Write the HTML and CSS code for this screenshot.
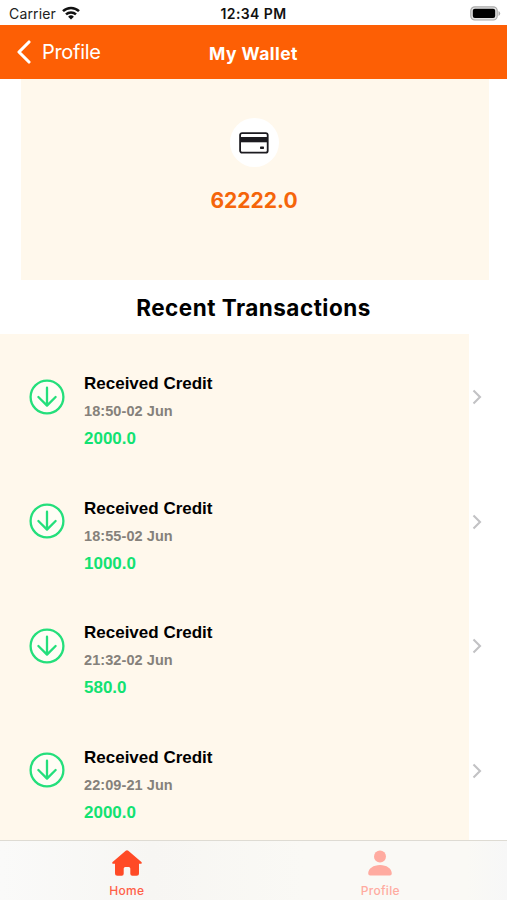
FILE: index.html
```html
<!DOCTYPE html>
<html lang="en">
<head>
    <meta charset="UTF-8">
    <meta name="viewport" content="width=device-width, initial-scale=1.0">
    <title>My Wallet</title>
    <link rel="stylesheet" href="styles.css">
</head>
<body>
    <div class="status-bar">
        <div class="carrier">
            <span>Carrier</span>
            <svg class="wifi" width="18" height="14" viewBox="0 0 18 14" fill="none" stroke="#111" stroke-width="2.5">
                <path d="M1 5.2a11.6 11.6 0 0 1 16 0M4 8.4a7.3 7.3 0 0 1 10 0"/>
                <path d="M9 13.6L6.1 10.7a4.2 4.2 0 0 1 5.8 0z" fill="#111" stroke="none"/>
            </svg>
        </div>
        <div class="time">12:34 PM</div>
        <svg class="battery" width="31" height="15" viewBox="0 0 31 15">
            <rect x="0.8" y="0.8" width="26.4" height="13.2" rx="4" fill="#e4e4e4" stroke="#aaa" stroke-width="1.2"/>
            <rect x="2.8" y="2.8" width="22.4" height="9.2" rx="2" fill="#000"/>
            <path d="M28.5 5v5q1.7-.8 1.7-2.5T28.5 5z" fill="#aaa"/>
        </svg>
    </div>

    <header class="nav-bar">
        <a class="back-btn" href="#">
            <svg width="15" height="24" viewBox="0 0 15 24" fill="none" stroke="#fff" stroke-width="3.1" stroke-linecap="round" stroke-linejoin="round">
                <path d="M13 2L3 12l10 10"/>
            </svg>
            <span>Profile</span>
        </a>
        <h1>My Wallet</h1>
    </header>

    <main>
        <section class="balance">
            <div class="card-icon">
                <svg width="30" height="22" viewBox="0 0 30 22">
                    <rect x="1.1" y="1.1" width="27.6" height="19.6" rx="2" fill="#fff" stroke="#1c1b20" stroke-width="1.8"/>
                    <path d="M1 5h28v5.3H1z" fill="#1c1b20"/>
                    <rect x="21" y="14.5" width="4" height="2.5" rx=".7" fill="#1c1b20"/>
                </svg>
            </div>
            <p class="amount">62222.0</p>
        </section>

        <h2>Recent Transactions</h2>

        <ul class="transactions">
            <li>
                <div class="transaction">
                    <svg class="received" viewBox="0 0 36 36"><circle cx="18" cy="18" r="16.4"/><path d="M18 8.7v17.8M9.4 18l8.6 8.6 8.6-8.6"/></svg>
                    <div>
                        <h3>Received Credit</h3>
                        <p class="date">18:50-02 Jun</p>
                        <p class="credit">2000.0</p>
                    </div>
                </div>
                <svg class="arrow" viewBox="0 0 10 16"><path d="M1.5 1.5L8 8l-6.5 6.5"/></svg>
            </li>
            <li>
                <div class="transaction">
                    <svg class="received" viewBox="0 0 36 36"><circle cx="18" cy="18" r="16.4"/><path d="M18 8.7v17.8M9.4 18l8.6 8.6 8.6-8.6"/></svg>
                    <div>
                        <h3>Received Credit</h3>
                        <p class="date">18:55-02 Jun</p>
                        <p class="credit">1000.0</p>
                    </div>
                </div>
                <svg class="arrow" viewBox="0 0 10 16"><path d="M1.5 1.5L8 8l-6.5 6.5"/></svg>
            </li>
            <li>
                <div class="transaction">
                    <svg class="received" viewBox="0 0 36 36"><circle cx="18" cy="18" r="16.4"/><path d="M18 8.7v17.8M9.4 18l8.6 8.6 8.6-8.6"/></svg>
                    <div>
                        <h3>Received Credit</h3>
                        <p class="date">21:32-02 Jun</p>
                        <p class="credit">580.0</p>
                    </div>
                </div>
                <svg class="arrow" viewBox="0 0 10 16"><path d="M1.5 1.5L8 8l-6.5 6.5"/></svg>
            </li>
            <li>
                <div class="transaction">
                    <svg class="received" viewBox="0 0 36 36"><circle cx="18" cy="18" r="16.4"/><path d="M18 8.7v17.8M9.4 18l8.6 8.6 8.6-8.6"/></svg>
                    <div>
                        <h3>Received Credit</h3>
                        <p class="date">22:09-21 Jun</p>
                        <p class="credit">2000.0</p>
                    </div>
                </div>
                <svg class="arrow" viewBox="0 0 10 16"><path d="M1.5 1.5L8 8l-6.5 6.5"/></svg>
            </li>
        </ul>
    </main>

    <nav class="tab-bar">
        <a class="tab active" href="#">
            <svg width="30" height="26" viewBox="0 0 30 26" fill="#ff4a26">
                <path d="M13.7.8a2 2 0 0 1 2.6 0L29.4 12q.7.8.2 1.4-.3.4-1 .4H27v9.4q0 2.5-2.5 2.5h-4.2q-2 0-2-2v-5.2q0-1.5-1.5-1.5h-3.6q-1.5 0-1.5 1.5v5.2q0 2-2 2H5.5Q3 25.7 3 23.2v-9.4H1.4q-.7 0-1-.4-.5-.6.2-1.4z"/>
            </svg>
            <span>Home</span>
        </a>
        <a class="tab" href="#">
            <svg width="30" height="26" viewBox="0 0 30 26" fill="#ffaba0">
                <circle cx="15" cy="6.5" r="6"/>
                <path d="M3.2 23.5C3.2 18.5 8.5 15 15 15s11.8 3.5 11.8 8.5q0 2-2 2H5.2q-2 0-2-2z"/>
            </svg>
            <span>Profile</span>
        </a>
    </nav>
</body>
</html>
```

FILE: styles.css
```css
* {
    box-sizing: border-box;
}
body {
    margin: 0;
    height: 100vh;
    display: flex;
    flex-direction: column;
    overflow: hidden;
    background: #fff;
    font-family: Inter, sans-serif;
}
h1, h2, h3, p, ul {
    margin: 0;
    padding: 0;
}
a {
    text-decoration: none;
}
/* STATUS BAR */
.status-bar {
    height: 25px;
    flex-shrink: 0;
    display: grid;
    grid-template-columns: 1fr auto 1fr;
    align-items: center;
    padding: 2px 6px 0 9px;
    font-size: 14px;
    color: #222;
}
.carrier {
    display: flex;
    align-items: center;
    gap: 6px;
    letter-spacing: 0.15px;
}
.wifi {
    margin-top: -2px;
}
.time {
    margin-right: 3px;
    font-weight: 600;
    letter-spacing: 0.4px;
    color: #111;
}
.battery {
    justify-self: end;
}
/* HEADER */
.nav-bar {
    height: 54px;
    flex-shrink: 0;
    display: grid;
    grid-template-columns: 1fr auto 1fr;
    align-items: center;
    padding: 2px 16px 0;
    background: #fd5f05;
    color: #fff;
}
.back-btn {
    display: flex;
    align-items: center;
    gap: 11px;
    margin-top: -2px;
    font-size: 20px;
    letter-spacing: -0.3px;
    color: #fff;
}
h1 {
    font-size: 17.5px;
    font-weight: 700;
    letter-spacing: 0.45px;
    margin-top: 1px;
}
main {
    flex: 1;
    min-height: 0;
    overflow: hidden;
}
/* BALANCE */
.balance {
    height: 201px;
    margin: 0 18px 0 21px;
    padding: 39px 2px 0 0;
    display: flex;
    flex-direction: column;
    align-items: center;
    background: #fff8ec;
}
.card-icon {
    width: 49px;
    height: 49px;
    display: flex;
    justify-content: center;
    align-items: center;
    border-radius: 50%;
    background: #fff;
}
.amount {
    margin-top: 20px;
    font-size: 21px;
    line-height: 28px;
    font-weight: 700;
    color: #f5650a;
}
h2 {
    height: 54px;
    line-height: 55px;
    text-align: center;
    font-size: 22.5px;
    font-weight: 700;
    letter-spacing: 0.48px;
    color: #000;
}
/* TRANSACTIONS */
.transactions {
    height: 510px;
    list-style: none;
    background: linear-gradient(to right, #fff8ec 469.5px, #fff 469.5px);
}
.transactions li {
    height: 124.6px;
    display: flex;
}
.transaction {
    width: 472px;
    display: flex;
    gap: 19px;
    padding: 36px 0 0 29px;
    font-family: "Liberation Sans", Arial, sans-serif;
    font-weight: bold;
}
.received {
    width: 36px;
    height: 36px;
    margin-top: 8.5px;
    fill: none;
    stroke: #24df7b;
    stroke-width: 2.3;
    stroke-linecap: round;
    stroke-linejoin: round;
}
.received circle {
    fill: #fffdf5;
}
h3 {
    padding-top: 1px;
    font-size: 17px;
    line-height: 26px;
    color: #000;
}
.date {
    font-size: 14.5px;
    line-height: 29px;
    letter-spacing: 0.08px;
    color: #85817b;
}
.credit {
    font-size: 17px;
    line-height: 25px;
    color: #12e272;
}
.arrow {
    width: 10px;
    height: 16px;
    margin-top: 55px;
    fill: none;
    stroke: #c2c2c4;
    stroke-width: 2.1;
}
/* TAB BAR */
.tab-bar {
    height: 60px;
    flex-shrink: 0;
    display: flex;
    border-top: 1px solid #dedbd3;
    background: linear-gradient(to right, #fafaf9, #f7f6f3 30%, #faf9f5 60%, #faf9f5 92%, #f7f7f7);
}
.tab {
    flex: 1;
    display: flex;
    flex-direction: column;
    align-items: center;
    padding-top: 9px;
    font-size: 12px;
    line-height: 15px;
    font-weight: 500;
    letter-spacing: 0.3px;
    color: #ffaba0;
}
.tab span {
    margin-top: 7px;
}
.tab.active {
    color: #ff6047;
}
```
